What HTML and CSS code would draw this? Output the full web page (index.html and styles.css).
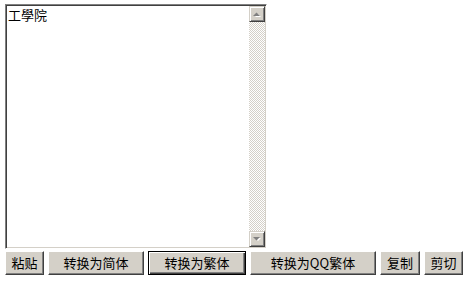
FILE: index.html
```html
<!DOCTYPE html>
<html lang="zh">
<head>
<meta charset="utf-8">
<title>简繁转换</title>
<link rel="stylesheet" href="styles.css">
</head>
<body>
<div class="page">
  <div class="editor">
    <div class="content">工學院</div>
    <div class="scrollbar">
      <div class="arrow">
        <svg width="14" height="14" viewBox="0 0 14 14"><polygon points="4,9 7,6 10,9" fill="#fff" transform="translate(1,1)"/><polygon points="3,9 6.5,5.5 10,9" fill="#808080"/></svg>
      </div>
      <div class="track"></div>
      <div class="arrow">
        <svg width="14" height="14" viewBox="0 0 14 14"><polygon points="4,5 7,8 10,5" fill="#fff" transform="translate(1,1)"/><polygon points="3,5 6.5,8.5 10,5" fill="#808080"/></svg>
      </div>
    </div>
  </div>
  <div class="buttons">
    <button class="btn w-paste">粘贴</button>
    <button class="btn w-simp">转换为简体</button>
    <button class="btn btn-default w-trad">转换为繁体</button>
    <button class="btn w-qq">转换为QQ繁体</button>
    <button class="btn w-copy">复制</button>
    <button class="btn w-cut">剪切</button>
  </div>
</div>
</body>
</html>
```
FILE: styles.css
```css
html, body {
  margin: 0;
  padding: 0;
  background: #fff;
}
.page {
  padding: 4px 5px;
  font-family: "Noto Sans CJK SC", "Liberation Sans", sans-serif;
}
.editor {
  box-sizing: border-box;
  width: 262px;
  height: 245px;
  display: flex;
  border-style: solid;
  border-width: 1px;
  border-color: #808080 #fff #fff #808080;
  box-shadow: inset 1px 1px #404040, inset -1px -1px #d4d0c8;
  padding: 1px;
  background: #fff;
}
.content {
  flex: 1;
  font-size: 13px;
  line-height: 15px;
  padding: 1px 0 0 1px;
  color: #000;
}
.scrollbar {
  width: 16px;
  display: flex;
  flex-direction: column;
}
.track {
  flex: 1;
  background: repeating-conic-gradient(#d4d0c8 0 25%, #fff 0 50%) 0 0 / 2px 2px;
}
.arrow {
  box-sizing: border-box;
  width: 16px;
  height: 16px;
  background: #d4d0c8;
  border-style: solid;
  border-width: 1px;
  border-color: #d4d0c8 #404040 #404040 #d4d0c8;
  box-shadow: inset 1px 1px #fff, inset -1px -1px #808080;
  display: flex;
  align-items: center;
  justify-content: center;
}
.arrow svg { display: block; }
.buttons {
  display: flex;
  gap: 4px;
  margin-top: 2px;
}
.btn {
  box-sizing: border-box;
  height: 24px;
  padding: 0;
  margin: 0;
  font-family: "Noto Sans CJK SC", "Liberation Sans", sans-serif;
  font-size: 13px;
  line-height: 20px;
  color: #000;
  background: #d4d0c8;
  border-style: solid;
  border-width: 1px;
  border-color: #fff #404040 #404040 #fff;
  box-shadow: inset -1px -1px #808080, inset 1px 1px #d4d0c8;
  border-radius: 0;
}
.btn-default {
  border-color: #000;
  box-shadow: inset 1px 1px #fff, inset -1px -1px #404040, inset -2px -2px #808080;
}
.w-paste { width: 39px; }
.w-simp { width: 96px; }
.w-trad { width: 98px; }
.w-qq { width: 126px; }
.w-copy { width: 40px; }
.w-cut { width: 39px; }
```
